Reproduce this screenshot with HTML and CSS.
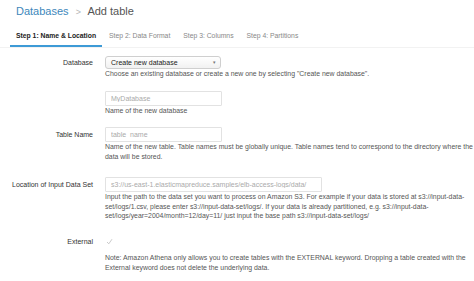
FILE: index.html
```html
<!DOCTYPE html>
<html lang="en">
<head>
    <meta charset="UTF-8">
    <title>Add table</title>
    <link rel="stylesheet" href="styles.css">
</head>
<body>
    <div class="header">
        <a href="#" class="crumb">Databases</a>
        <span class="sep">&gt;</span>
        <span class="title">Add table</span>
    </div>
    <div class="tabs">
        <span class="tab active">Step 1: Name &amp; Location</span>
        <span class="tab">Step 2: Data Format</span>
        <span class="tab">Step 3: Columns</span>
        <span class="tab">Step 4: Partitions</span>
    </div>
    <div class="form">
        <div class="row">
            <div class="label select-label">Database</div>
            <div class="field">
                <div class="select">
                    <span>Create new database</span>
                    <span class="arrow">&#9662;</span>
                </div>
                <p class="help">Choose an existing database or create a new one by selecting "Create new database".</p>
            </div>
        </div>
        <div class="row">
            <div class="label"></div>
            <div class="field">
                <input type="text" class="input short" placeholder="MyDatabase">
                <p class="help">Name of the new database</p>
            </div>
        </div>
        <div class="row wide-gap">
            <div class="label">Table Name</div>
            <div class="field">
                <input type="text" class="input short" placeholder="table_name">
                <p class="help">Name of the new table. Table names must be globally unique. Table names tend to correspond to the directory where the data will be stored.</p>
            </div>
        </div>
        <div class="row wide-gap">
            <div class="label">Location of Input Data Set</div>
            <div class="field">
                <input type="text" class="input long" placeholder="s3://us-east-1.elasticmapreduce.samples/elb-access-logs/data/">
                <p class="help">Input the path to the data set you want to process on Amazon S3. For example if your data is stored at s3://input-data-set/logs/1.csv, please enter s3://input-data-set/logs/. If your data is already partitioned, e.g. s3://input-data-set/logs/year=2004/month=12/day=11/ just input the base path s3://input-data-set/logs/</p>
            </div>
        </div>
        <div class="row">
            <div class="label check-label">External</div>
            <div class="field">
                <div class="check">
                    <svg width="7" height="7" viewBox="0 0 7 7"><path d="M1 4 L2.8 5.8 L6 1.2" fill="none" stroke="#c4c4c4" stroke-width="0.9"/></svg>
                </div>
                <p class="help note">Note: Amazon Athena only allows you to create tables with the EXTERNAL keyword. Dropping a table created with the External keyword does not delete the underlying data.</p>
            </div>
        </div>
    </div>
</body>
</html>
```

FILE: styles.css
```css
body {
    margin: 0;
    padding: 0;
    font-family: "Liberation Sans", Arial, sans-serif;
    background: #fff;
    color: #333;
}
.header {
    height: 23px;
    line-height: 23px;
    padding-left: 16px;
    font-size: 11px;
}
.crumb {
    color: #3d87bb;
    text-decoration: none;
}
.sep {
    color: #b5b5b5;
    margin: 0 4px;
    font-size: 9px;
}
.title {
    color: #555;
}
.tabs {
    display: flex;
    padding-left: 10px;
    border-bottom: 1px solid #f2f2f2;
}
.tab {
    font-size: 6.8px;
    color: #888;
    padding: 9px 6px 5px;
    line-height: 8px;
    border-bottom: 2px solid transparent;
    margin-right: 1px;
}
.tab.active {
    color: #222;
    font-weight: bold;
    border-bottom-color: #3d9ad6;
}
.form {
    padding-top: 8px;
}
.row {
    display: flex;
    margin-bottom: 12px;
}
.row.wide-gap {
    margin-bottom: 15px;
}
.label {
    width: 93px;
    flex: none;
    text-align: right;
    font-size: 7px;
    color: #333;
    line-height: 15px;
}
.select-label {
    line-height: 13px;
}
.check-label {
    line-height: 12px;
}
.field {
    margin-left: 12px;
    flex: 1;
}
.select {
    width: 105px;
    height: 11px;
    border: 1px solid #cfcfcf;
    border-radius: 3px;
    background: linear-gradient(#fff, #f1f1f1);
    font-size: 7px;
    line-height: 11px;
    color: #222;
    padding: 0 4px 0 5px;
    display: flex;
    justify-content: space-between;
}
.arrow {
    color: #777;
    font-size: 5px;
}
.input {
    display: block;
    box-sizing: border-box;
    height: 15px;
    border: 1px solid #e2e2e2;
    border-radius: 1px;
    padding: 0 5px;
    font-family: "Liberation Sans", Arial, sans-serif;
    font-size: 7px;
    color: #333;
    margin: 0;
}
.input::placeholder {
    color: #aaa;
}
.input.short {
    width: 117px;
}
.input.long {
    width: 217px;
}
.help {
    margin: 0;
    font-size: 6.9px;
    line-height: 9.7px;
    color: #555;
}
.check {
    height: 12px;
    display: flex;
    align-items: center;
    padding-left: 1px;
}
.note {
    margin-top: 5px;
}
```
